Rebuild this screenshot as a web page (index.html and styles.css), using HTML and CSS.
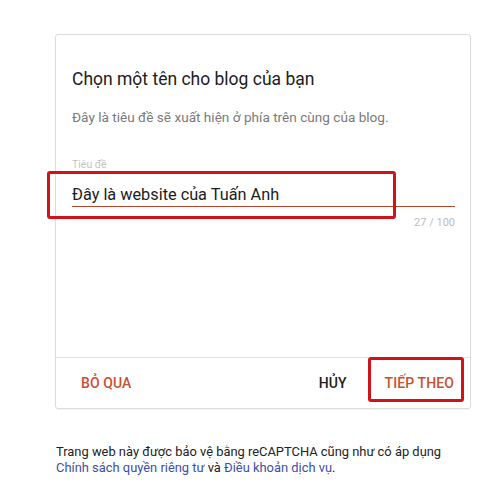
FILE: index.html
```html
<!DOCTYPE html>
<html lang="vi">
<head>
<meta charset="utf-8">
<title>Blogger</title>
<link rel="stylesheet" href="styles.css">
</head>
<body>
<div class="page">
  <div class="card">
    <div class="card-body">
      <h1 class="title">Chọn một tên cho blog của bạn</h1>
      <p class="desc">Đây là tiêu đề sẽ xuất hiện ở phía trên cùng của blog.</p>
      <div class="field">
        <div class="label">Tiêu đề</div>
        <div class="input">Đây là website của Tuấn Anh</div>
        <div class="counter">27 / 100</div>
        <div class="mark mark-input"></div>
      </div>
    </div>
    <div class="card-footer">
      <span class="btn btn-skip">BỎ QUA</span>
      <span class="spacer"></span>
      <span class="btn btn-cancel">HỦY</span>
      <span class="btn btn-next">TIẾP THEO<span class="mark mark-next"></span></span>
    </div>
  </div>
  <p class="legal">Trang web này được bảo vệ bằng reCAPTCHA cũng như có áp dụng <a href="#" class="link">Chính sách quyền riêng tư</a> và <a href="#" class="link">Điều khoản dịch vụ</a>.</p>
</div>
</body>
</html>
```
FILE: styles.css
```css
* { box-sizing: border-box; }
html, body { margin: 0; padding: 0; background: #fff; }
body { font-family: Roboto, "Noto Sans", Arial, sans-serif; color: #212121; }
.page { padding: 34px 0 0 55px; width: 500px; }
.card {
  width: 416px;
  height: 375px;
  border: 1px solid #dcdcdc;
  border-radius: 3px;
  display: flex;
  flex-direction: column;
  box-shadow: 0 1px 1px rgba(0,0,0,0.04);
}
.card-body { flex: 1; padding: 32px 15px 0 16px; }
.title { margin: 0; font-size: 17.5px; line-height: 24px; font-weight: 400; color: #202020; }
.desc { margin: 17px 0 0; font-size: 13.6px; line-height: 18px; color: #7a7a7a; }
.field { position: relative; margin-top: 33px; }
.label { font-size: 10.5px; line-height: 12px; color: #c4c4c4; }
.input {
  font-size: 16.3px;
  line-height: 20px;
  padding: 14px 0 1px;
  color: #1c1c1c;
  border-bottom: 1px solid #b3452a;
}
.counter { text-align: right; font-size: 11px; line-height: 14px; color: #bcbcbc; margin-top: 9px; }
.mark { position: absolute; border: 3px solid #d0121b; border-radius: 3px; }
.mark-input { left: -25px; top: 12px; width: 349px; height: 48px; }
.card-footer {
  height: 51px;
  border-top: 1px solid #e2e2e2;
  display: flex;
  align-items: center;
  padding: 0 16px 0 25px;
}
.btn { position: relative; font-size: 14px; font-weight: 500; letter-spacing: 0.1px; }
.btn-skip { color: #c95030; }
.spacer { flex: 1; }
.btn-cancel { color: #212121; margin-right: 38px; }
.btn-next { color: #c95030; }
.mark-next { left: -17px; top: -18px; width: 96px; height: 45px; }
.legal { margin: 35px 0 0 1px; width: 420px; font-size: 12.9px; line-height: 16px; color: #222; }
.link { color: #3c4ea8; text-decoration: none; }
```
